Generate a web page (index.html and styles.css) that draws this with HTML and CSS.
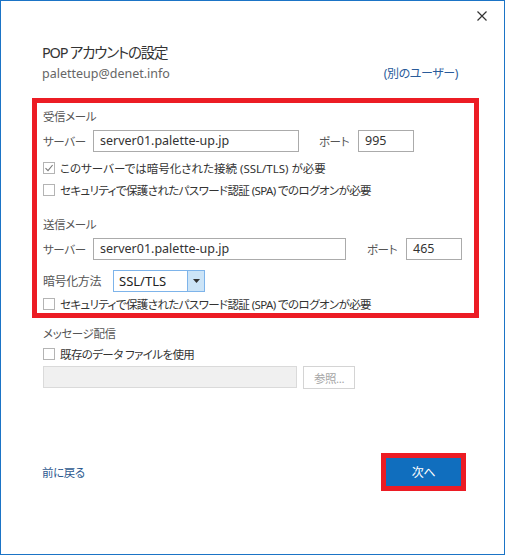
FILE: index.html
```html
<!DOCTYPE html>
<html lang="ja">
<head>
<meta charset="UTF-8">
<title>POP アカウントの設定</title>
<link rel="stylesheet" href="styles.css">
</head>
<body>
<div class="window">
	<div class="titlebar">
		<svg class="close" width="10" height="10" viewBox="0 0 10 10"><path d="M0.5 0.5L9.5 9.5M9.5 0.5L0.5 9.5" stroke="#333" stroke-width="1.2" fill="none"/></svg>
	</div>

	<div class="head">
		<div class="title">POP アカウントの設定</div>
		<div class="account">
			<span class="mail">paletteup@denet.info</span>
			<span class="link">(別のユーザー)</span>
		</div>
	</div>

	<div class="mark">
		<!-- 受信 -->
		<div class="sec">受信メール</div>
		<div class="field">
			<span class="lbl">サーバー</span>
			<span class="inp w1">server01.palette-up.jp</span>
			<span class="lbl port">ポート</span>
			<span class="inp pnum">995</span>
		</div>
		<div class="chk first">
			<span class="box"><svg width="10" height="10" viewBox="0 0 10 10"><path d="M1.5 5.2L4 7.7L8.6 2" stroke="#7a7a7a" stroke-width="1.1" fill="none"/></svg></span>
			<span>このサーバーでは暗号化された接続 (SSL/TLS) が必要</span>
		</div>
		<div class="chk">
			<span class="box"></span>
			<span>セキュリティで保護されたパスワード認証 (SPA) でのログオンが必要</span>
		</div>

		<!-- 送信 -->
		<div class="sec out">送信メール</div>
		<div class="field">
			<span class="lbl">サーバー</span>
			<span class="inp w2">server01.palette-up.jp</span>
			<span class="lbl port">ポート</span>
			<span class="inp pnum">465</span>
		</div>
		<div class="field enc">
			<span class="lbl wide">暗号化方法</span>
			<span class="select"><span class="val">SSL/TLS</span><span class="arrow"><svg width="7" height="4" viewBox="0 0 7 4"><path d="M0 0H7L3.5 4Z" fill="#333"/></svg></span></span>
		</div>
		<div class="chk">
			<span class="box"></span>
			<span>セキュリティで保護されたパスワード認証 (SPA) でのログオンが必要</span>
		</div>
	</div>

	<div class="deliver">
		<div class="sec">メッセージ配信</div>
		<div class="chk">
			<span class="box"></span>
			<span>既存のデータ ファイルを使用</span>
		</div>
		<div class="browse">
			<span class="inp off"></span>
			<span class="btn off">参照...</span>
		</div>
	</div>

	<div class="foot">
		<span class="back">前に戻る</span>
		<span class="next-mark"><span class="next">次へ</span></span>
	</div>
</div>
</body>
</html>
```

FILE: styles.css
```css
html,body { margin:0; padding:0; }
body { width:505px; height:555px; background:#fff; font-family:"Noto Sans","Noto Sans CJK JP",sans-serif; font-size:11.5px; letter-spacing:-0.4px; color:#333; font-feature-settings:"palt"; }

.window{ box-sizing:border-box; width:505px; height:555px; border:1px solid #1b74c6; }

.titlebar{ height:30px; display:flex; justify-content:flex-end; align-items:center; padding-right:17px; }

.head{ padding:10px 46px 0 41px; }
.title{ height:22px; line-height:22px; font-size:14.5px; letter-spacing:-1.2px; color:#333; }
.account{ height:20px; display:flex; justify-content:space-between; align-items:center; }
.mail{ color:#666; font-size:12.5px; letter-spacing:0; }
.link{ color:#2a5b9a; font-size:12px; }

/* 赤枠 */
.mark{ margin:15px 0 0 31px; width:447px; height:220px; box-sizing:border-box; border:5px solid #ec1c24; padding:4px 0 0 6px; }

.sec{ height:20px; line-height:20px; color:#555; }
.sec.out{ margin-top:15px; }

.field{ display:flex; align-items:center; height:22px; margin-top:3px; }
.field + .chk.first{ margin-top:6px; }
.lbl{ width:50px; color:#555; }
.lbl.port{ width:39px; margin-left:20px; }
.lbl.wide{ width:70px; font-size:12px; }
.inp{ box-sizing:border-box; height:22px; border:1px solid #ababab; padding:0 6px; line-height:20px; color:#333; font-size:12.5px; letter-spacing:0; }
.w1{ width:206px; }
.w2{ width:253px; }
.w2 + .lbl.port{ margin-left:21px; }
.pnum{ width:56px; }

.enc{ margin-top:10px; }
.select{ box-sizing:border-box; width:92px; height:22px; border:1px solid #7eb4ea; display:flex; }
.select .val{ flex:1; padding-left:5px; line-height:20px; font-size:13px; letter-spacing:0; color:#222; }
.select .arrow{ width:16px; background:#cce4f7; border-left:1px solid #7eb4ea; display:flex; align-items:center; justify-content:center; }

.chk{ display:flex; align-items:center; height:20px; margin-top:2px; color:#333; font-size:11.5px; letter-spacing:-0.6px; }
.chk.first{ letter-spacing:0; }
.box{ box-sizing:border-box; width:12px; height:12px; border:1px solid #b4b4b4; margin-right:5px; display:flex; align-items:center; justify-content:center; }

.deliver{ padding:6px 0 0 42px; }
.deliver .chk{ margin-top:0; }
.browse{ display:flex; margin-top:2px; }
.inp.off{ width:254px; background:#f0f0f0; border-color:#dadada; }
.btn.off{ box-sizing:border-box; width:52px; height:23px; margin-left:6px; border:1px solid #d4d4d4; color:#a6a6a6; display:flex; align-items:center; justify-content:center; }

.foot{ display:flex; justify-content:space-between; align-items:center; margin-top:64px; padding:0 38px 0 41px; }
.back{ color:#2e5a8f; }
.next-mark{ border:5px solid #ec1c24; }
.next{ display:flex; align-items:center; justify-content:center; width:75px; height:28px; background:#106ebe; color:#fff; font-size:12px; }
```
